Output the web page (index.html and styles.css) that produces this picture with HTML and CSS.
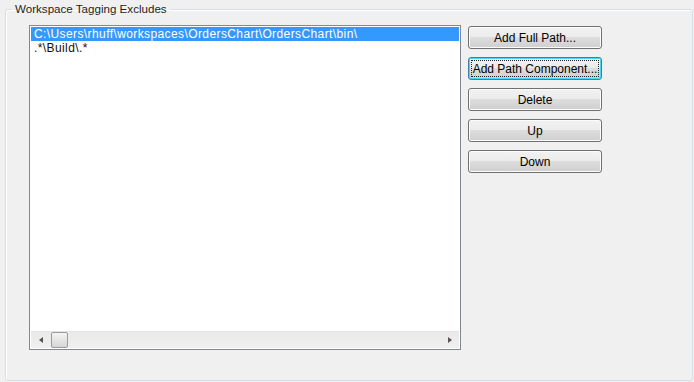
FILE: index.html
```html
<!DOCTYPE html>
<html lang="en">
<head>
    <meta charset="UTF-8">
    <title>Workspace Tagging Excludes</title>
    <link rel="stylesheet" href="styles.css">
</head>
<body>
<fieldset class="group">
    <legend>Workspace Tagging Excludes</legend>
    <div class="group-body">
        <div class="listbox">
            <ul class="items">
                <li class="item selected">C:\Users\rhuff\workspaces\OrdersChart\OrdersChart\bin\</li>
                <li class="item">.*\Build\.*</li>
            </ul>
            <div class="hscroll">
                <span class="arrow arrow-left"></span>
                <span class="thumb"></span>
                <span class="track"></span>
                <span class="arrow arrow-right"></span>
            </div>
        </div>
        <div class="actions">
            <button type="button">Add Full Path...</button>
            <button type="button" class="focused"><span class="focus-ring">Add Path Component...</span></button>
            <button type="button">Delete</button>
            <button type="button">Up</button>
            <button type="button">Down</button>
        </div>
    </div>
</fieldset>
</body>
</html>
```

FILE: styles.css
```css
* {
    box-sizing: border-box;
    font-family: 'Liberation Sans', Arial, sans-serif;
}

body {
    margin: 0;
    background: #f0f0f0;
    width: 694px;
    height: 382px;
    overflow: hidden;
}

.group {
    margin: 2px 1px 0 5px;
    padding: 0;
    height: 379px;
    border: 1px solid #d5dfe5;
    border-radius: 3px;
    box-shadow: inset 1px 1px 0 #fff;
}

.group legend {
    padding: 0 3px;
    margin-left: 6px;
    font-size: 11.6px;
    line-height: 14px;
    color: #1e1e1e;
}

.group-body {
    display: flex;
    gap: 7px;
    padding: 9px 0 0 23px;
}

.listbox {
    width: 432px;
    height: 325px;
    border: 1px solid #828790;
    background: #fff;
    padding: 1px;
    display: flex;
    flex-direction: column;
}

.items {
    list-style: none;
    margin: 0;
    padding: 0;
    flex: 1;
}

.item {
    height: 14px;
    line-height: 14px;
    font-size: 12px;
    letter-spacing: 0.4px;
    padding-left: 3px;
    color: #111;
    white-space: nowrap;
}

.item.selected {
    background: #3399ff;
    color: #fff;
}

.hscroll {
    height: 17px;
    display: flex;
    align-items: center;
    background: linear-gradient(#e9e9e9, #f0f0f0);
    border-top: 1px solid #e3e3e3;
}

.arrow {
    width: 19px;
    height: 17px;
    display: flex;
    align-items: center;
    justify-content: center;
}

.arrow::before {
    content: '';
    border-top: 3px solid transparent;
    border-bottom: 3px solid transparent;
}

.arrow-left::before {
    border-right: 4px solid #555;
}

.arrow-right::before {
    border-left: 4px solid #555;
}

.thumb {
    width: 17px;
    height: 16px;
    margin-left: 1px;
    border: 1px solid #9b9b9b;
    border-radius: 2px;
    background: linear-gradient(#f4f4f4, #d6d6d6);
}

.track {
    flex: 1;
}

.actions {
    display: flex;
    flex-direction: column;
    gap: 8px;
    padding-top: 1px;
}

.actions button {
    width: 134px;
    height: 23px;
    padding: 0;
    border: 1px solid #707070;
    border-radius: 3px;
    background: linear-gradient(#f2f2f2 0%, #ebebeb 49%, #dddddd 50%, #cfcfcf 100%);
    font-size: 12px;
    color: #000;
    box-shadow: inset 0 0 0 1px #fcfcfc;
}

.actions button.focused {
    border-color: #3c7fb1;
    box-shadow: inset 0 0 0 1px #48d5f9;
    padding: 2px;
}

.focus-ring {
    display: flex;
    align-items: center;
    justify-content: center;
    height: 100%;
    border: 1px dotted #222;
}
```
